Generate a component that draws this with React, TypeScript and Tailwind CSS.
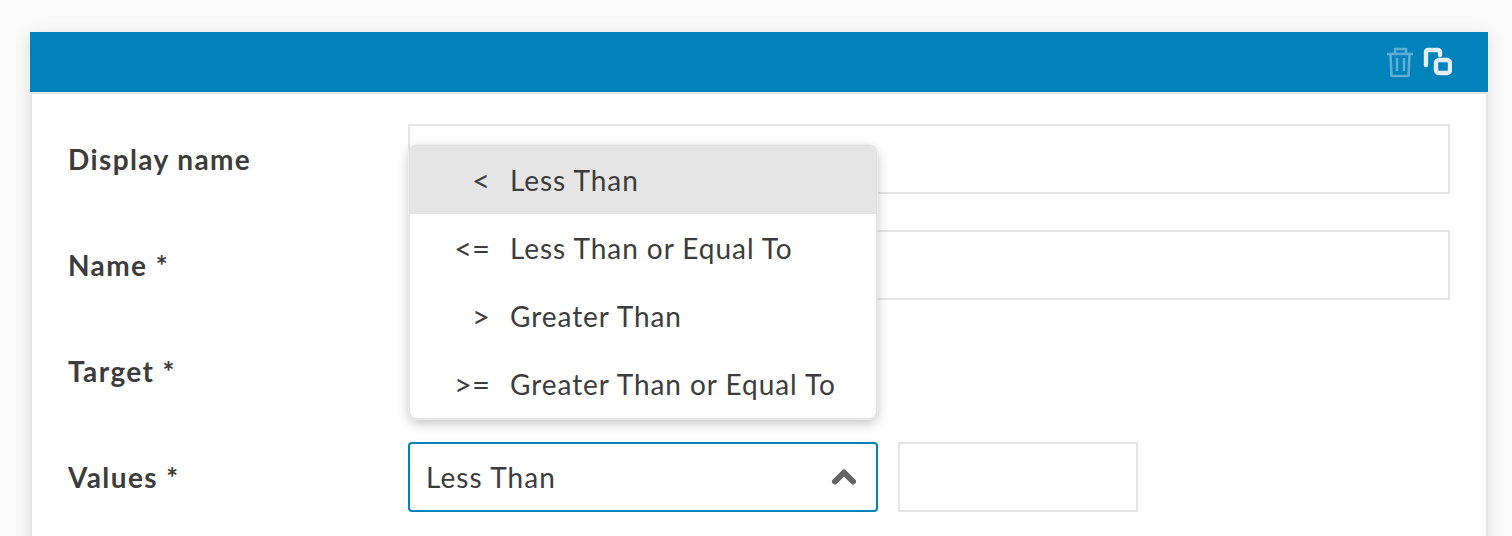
import { ChevronUp } from "lucide-react";

const options = [
  { sign: "<", label: "Less Than", active: true },
  { sign: "<=", label: "Less Than or Equal To" },
  { sign: ">", label: "Greater Than" },
  { sign: ">=", label: "Greater Than or Equal To" },
];

function Label({ children }: { children: string }) {
  return <label className="w-[340px] shrink-0 text-[28px] font-bold tracking-[1.4px] text-[#3c3c3c]">{children}</label>;
}

export default function App() {
  return (
    <div className="h-[536px] overflow-hidden bg-[#fafafa] px-[30px] pt-8 font-['Lato',sans-serif]">
      <div className="w-[1458px] shadow-[0_4px_16px_rgba(0,0,0,0.12)]">
        <div className="flex h-[60px] items-start justify-end gap-[9px] bg-[#0082bb] pt-[15px] pr-[36px]">
          <svg width="26" height="30" viewBox="0 0 26 30" fill="none" stroke="#62add4" strokeWidth="2.5">
            <path d="M0 7h26M3.5 7l1 22h17l1-22M8 7V2h11v5M10 11v13M17 11v13" />
          </svg>
          <svg width="30" height="30" viewBox="0 0 30 30" fill="none" stroke="#e3eef5" strokeWidth="4.4" strokeLinejoin="round" strokeLinecap="round">
            <path d="M4 18V5a2 2 0 0 1 2-2h10a2 2 0 0 1 2 2v3" />
            <rect x="14" y="13" width="14" height="13" rx="3" />
          </svg>
        </div>
        <div className="relative flex h-[500px] flex-col gap-9 border-x-2 border-t-2 border-[#e5e5e5] bg-white pt-[30px] pr-9 pl-9">
          <div className="flex items-center">
            <Label>Display name</Label>
            <div className="h-[70px] flex-1 border-2 border-[#e5e5e5]" />
          </div>
          <div className="flex items-center">
            <Label>Name *</Label>
            <div className="h-[70px] flex-1 border-2 border-[#e5e5e5]" />
          </div>
          <div className="flex items-center">
            <Label>Target *</Label>
            <div className="ml-px h-[70px] w-[468px] rounded-md border-2 border-[#e5e5e5]" />
          </div>
          <div className="flex items-center">
            <Label>Values *</Label>
            <div className="flex h-[70px] w-[470px] items-center justify-between rounded-[4px] border-2 border-[#0082bb] pr-[14px] pl-4 text-[28px] tracking-[1.1px] text-[#3c3c3c]">
              <span>Less Than</span>
              <ChevronUp size={36} strokeWidth={4} className="text-[#666]" />
            </div>
            <div className="ml-5 h-[70px] w-[240px] border-2 border-[#e5e5e5]" />
          </div>
          <ul className="absolute top-[51px] left-[377px] w-[468px] overflow-hidden rounded-lg border border-[#e0e0e0] bg-white text-[28px] tracking-[0.95px] text-[#3c3c3c] shadow-[0_0_0_1px_#ececec,0_4px_12px_rgba(0,0,0,0.25)]">
            {options.map((o) => (
              <li key={o.label} className={`flex h-[68px] items-center ${o.active ? "bg-[#e5e5e5]" : ""}`}>
                <span className="w-[80px] text-right text-[31px] tracking-normal">{o.sign}</span>
                <span className="ml-5">{o.label}</span>
              </li>
            ))}
          </ul>
        </div>
      </div>
    </div>
  );
}
